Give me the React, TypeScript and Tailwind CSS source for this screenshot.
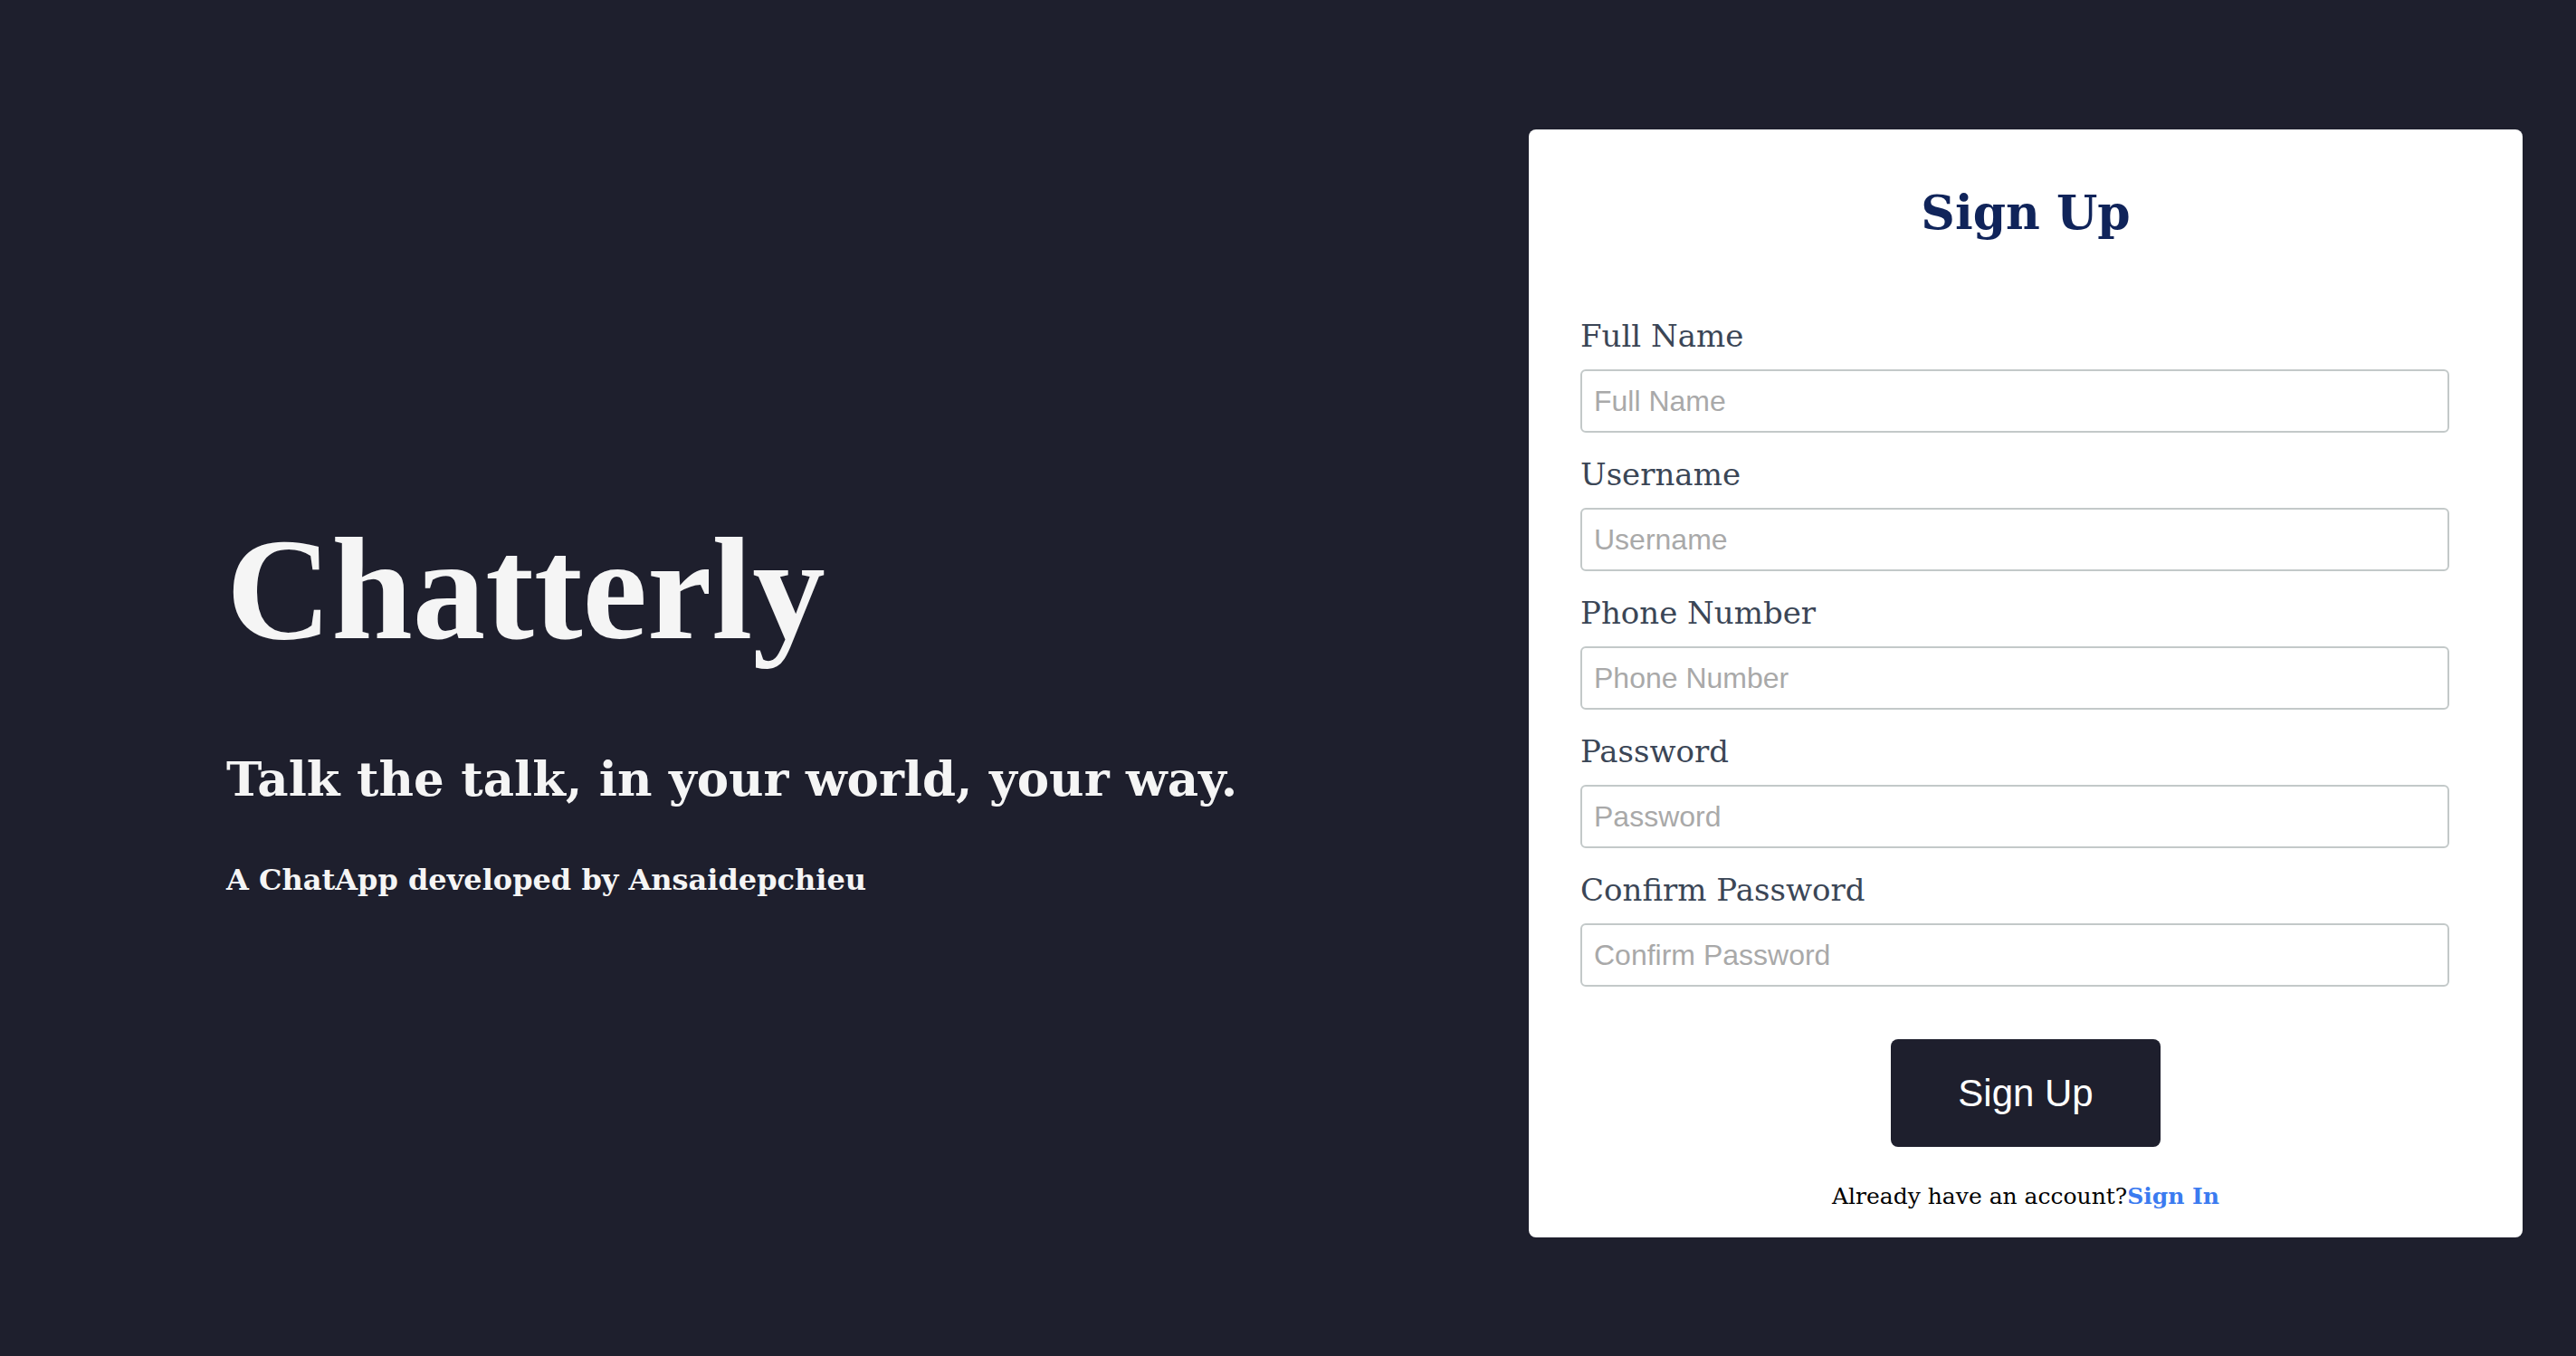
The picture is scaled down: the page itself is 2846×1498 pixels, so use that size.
import React from 'react';

const display = "font-['Liberation_Serif',_'Times_New_Roman',_serif]";
const serif = "font-['DejaVu_Serif',_Georgia,_serif]";
const sans = "font-['Liberation_Sans',_Arial,_sans-serif]";

const fields = [
  { id: 'fullName', label: 'Full Name', type: 'text' },
  { id: 'username', label: 'Username', type: 'text' },
  { id: 'phone', label: 'Phone Number', type: 'tel' },
  { id: 'password', label: 'Password', type: 'password' },
  { id: 'confirm', label: 'Confirm Password', type: 'password' },
];

const Field: React.FC<{ id: string; label: string; type: string }> = ({ id, label, type }) => (
  <div className="flex flex-col">
    <label htmlFor={id} className={`${serif} text-[34px] leading-[36px] text-[#3b4656] mb-[19px]`}>
      {label}
    </label>
    <input
      id={id}
      type={type}
      placeholder={label}
      className={`${sans} w-[960px] h-[70px] px-[13px] text-[32px] text-[#333] placeholder:text-[#a9a9a9] border-2 border-[#c3c9c9] rounded-[6px] outline-none bg-white`}
    />
  </div>
);

export default function App() {
  return (
    <div className="w-full h-[1498px] bg-[#1e1f2d] flex items-start overflow-hidden">
      <div className="pl-[250px] pt-[572px] flex-1 text-[#f5f5f5] font-bold">
        <h1 className={`${display} text-[161px] leading-[159px]`}>Chatterly</h1>
        <h2 className={`${serif} mt-[99px] text-[53px] leading-[60px]`}>Talk the talk, in your world, your way.</h2>
        <p className={`${serif} mt-[68px] text-[32px] leading-[29px]`}>A ChatApp developed by Ansaidepchieu</p>
      </div>

      <div className="mt-[143px] mr-[59px] w-[1098px] bg-white rounded-[8px] pt-[62px] pb-[30px] px-[57px] flex flex-col">
        <h2 className={`${serif} text-center text-[52px] leading-[60px] font-bold text-[#10245a]`}>Sign Up</h2>
        <form className="mt-[88px] flex flex-col gap-[28px]" onSubmit={(e) => e.preventDefault()}>
          {fields.map((f) => (
            <Field key={f.id} {...f} />
          ))}
        </form>
        <div className="mt-[58px] flex justify-center">
          <button className={`${sans} w-[298px] h-[119px] bg-[#1e1f2d] text-white text-[42px] rounded-[8px]`}>
            Sign Up
          </button>
        </div>
        <p className={`${serif} mt-[40px] text-center text-[25px] leading-[30px] text-black`}>
          Already have an account?<a href="#" className="text-[#3b7bf0] font-bold">Sign In</a>
        </p>
      </div>
    </div>
  );
}
